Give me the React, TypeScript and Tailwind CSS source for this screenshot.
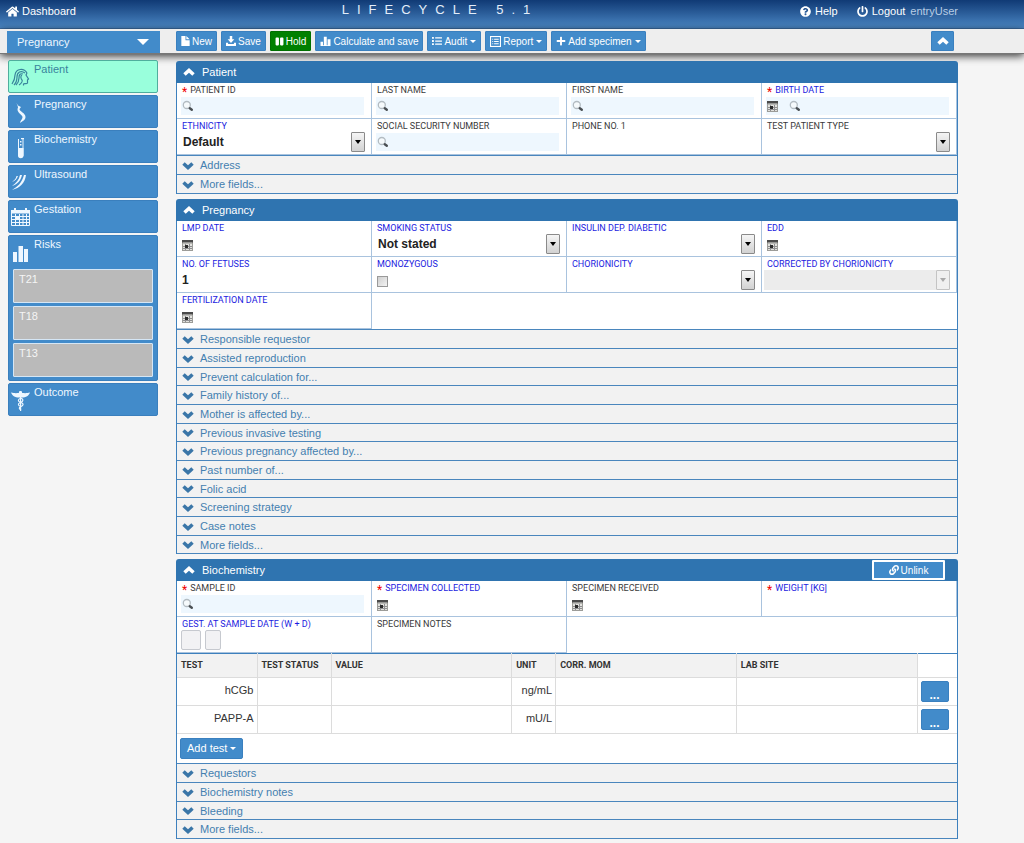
import { ReactNode, useState } from "react";
import { FaHome, FaLink, FaList, FaPause, FaPlus, FaPowerOff, FaQuestionCircle } from "react-icons/fa";

type FieldProps = {
  id: string;
  label: string;
  required?: boolean;
  blue?: boolean;
  children: ReactNode;
};

/* ---------- small drawings ---------- */

const Caret = () => (
  <svg viewBox="0 0 8 4" className="w-[6px] h-[3px] ml-px" fill="currentColor">
    <path d="M0 0h8L4 4z" />
  </svg>
);

const ChevronUp = () => (
  <svg viewBox="0 0 12 8" className="w-[12px] h-[8px]" fill="currentColor">
    <path d="M6 0l5.700 5.300L9.300 7.800 6 4.700 2.700 7.800.3 5.300z" />
  </svg>
);

const ChevronDown = () => (
  <svg viewBox="0 0 12 8" className="w-[12px] h-[8px] text-[#3a76a8]" fill="currentColor">
    <path d="M6 8L.3 2.700 2.700.2 6 3.300 9.300.2l2.400 2.500z" />
  </svg>
);

const FileIcon = () => (
  <svg viewBox="0 0 10 12" className="w-[9px] h-[10px]" fill="currentColor">
    <path d="M0 0h5v5h5v7H0z M6 0l4 4H6z" />
  </svg>
);

const SaveIcon = () => (
  <svg viewBox="0 0 12 12" className="w-[10px] h-[10px]" fill="currentColor">
    <path d="M4.500 0h3v4H10L6 8.300 2 4h2.500z M0 8h2.500v1.500h7V8H12v4H0z" />
  </svg>
);

const ChartIcon = () => (
  <svg viewBox="0 0 12 12" className="w-[11px] h-[10px]" fill="currentColor">
    <path d="M0 7h3v4H0z M4 1h3.500v10H4z M8.500 4H12v7H8.500z M0 11h12v1H0z" />
  </svg>
);

const ReportIcon = () => (
  <svg viewBox="0 0 12 12" className="w-[11px] h-[11px]" fill="none" stroke="currentColor">
    <rect x=".6" y=".6" width="10.800" height="10.800" strokeWidth="1.200" />
    <path d="M2.500 3.500h1M4.500 3.500h5M2.500 6h1M4.500 6h5M2.500 8.500h1M4.500 8.500h5" strokeWidth="1.200" />
  </svg>
);

const SearchIcon = () => (
  <svg viewBox="0 0 12 12" className="w-[12px] h-[12px]">
    <circle cx="4.800" cy="5" r="3.500" fill="#f6fafc" stroke="#b3bcc2" strokeWidth="1.300" />
    <path d="M7.800 8.200l2 1.500" stroke="#4a4f53" strokeWidth="2.400" strokeLinecap="round" />
  </svg>
);

const CalendarIcon = () => (
  <svg viewBox="0 0 11 11" className="w-[11px] h-[11px]">
    <rect x=".5" y=".5" width="10" height="10" fill="#e2e2de" stroke="#9c9c98" />
    <path d="M0 0h11v2.500H0z" fill="#4a4a4a" />
    <path d="M1 3.500h9" stroke="#b9b9b6" />
    <path d="M3.500 4v6M7.500 4v6M1 6.500h9M1 8.500h9" stroke="#8e8e90" />
    <path d="M3 5h3v3H3z" fill="#2c2c2c" />
  </svg>
);

const WomanIcon = () => (
  <svg viewBox="0 0 19 19" className="w-[19px] h-[19px]" fill="none" stroke="currentColor" strokeWidth="1.200">
    <path d="M16 5C13 0 5 0 4 7c0 4-1 6-3 9M14 5C10 2 6 4 6 9c0 4-1 6-3 8M12 6c-3-1-4 1-4 4s-1 5-3 7M11 7c-2 1-1 4 0 5s-1 4-3 5" />
    <path d="M16 5l-1 2 2.500 4-1 1v3c-1 1.500-3 0-4 1v1.500" />
  </svg>
);

const BellyIcon = () => (
  <svg viewBox="0 0 19 20" className="w-[19px] h-[20px]" fill="currentColor">
    <path d="M5.500 0l1.500 2.500 3 1.500-1.500 2c0 2.500 6 4 6 8 0 3-3 4-5.500 6 .5-3 2.500-3.500 2.500-6 0-2-5-4-5-7.500 0-1 .5-1.500.5-2.500z" />
  </svg>
);

const TubeIcon = () => (
  <svg viewBox="0 0 19 21" className="w-[19px] h-[21px]">
    <path d="M7.500 1v16.500a2.500 2.500 0 0 0 4.500 0V1" fill="none" stroke="currentColor" />
    <path d="M7 10h5.500v7.500a2.700 2.700 0 0 1-5.500 0z M9 3h1.500v1.500H9z M9 6h1.500v1.500H9z M10 0h3v1.200h-3z" fill="currentColor" />
  </svg>
);

const WavesIcon = () => (
  <svg viewBox="0 0 19 18" className="w-[19px] h-[18px]" fill="currentColor">
    <path d="M15 2C14 10 9 15 1 17c5-3 10-7 12-15z M11 2c-1 5-4 9-10 11 4-3 7-6 8-11z M7 3c-1 3-3 5-6 6 2-2 4-3 4.500-6z" />
  </svg>
);

const MonthIcon = () => (
  <svg viewBox="0 0 19 18" className="w-[19px] h-[18px]" fill="currentColor">
    <path d="M0 2h19v3.500H0z M3 0h2v2H3z M14 0h2v2h-2z" />
    <path
      d="M.5 5v12.500h18V5M4.500 6v11M8.500 6v11M12 6v11M15.500 6v11M1 8.500h17M1 11.500h17M1 14.500h17"
      fill="none"
      stroke="currentColor"
    />
    <path d="M4 8h4v4H4z" />
  </svg>
);

const BarsIcon = () => (
  <svg viewBox="0 0 19 18" className="w-[19px] h-[18px]" fill="currentColor">
    <path d="M2 7h4v10H2z M7.500 1H12v16H7.500z M13 4h4v13h-4z" />
  </svg>
);

const CaduceusIcon = () => (
  <svg viewBox="0 0 19 20" className="w-[19px] h-[20px]" fill="currentColor">
    <path d="M0 1.500c4 1 6 .5 8 .5a1.600 1.600 0 1 1 3 0c2 0 4 .5 8-.5-1 3-4 5-8 5H8c-4 0-7-2-8-5z M9 5h1.200v15H9z" />
    <path
      d="M10 7c-4 2-3 3.500 0 4.500s2.500 3 0 4-2 2.500 0 3.500M9.500 7c3 1 3.500 3 0 4.500s-2 3 0 4"
      fill="none"
      stroke="currentColor"
      strokeWidth="1.200"
    />
  </svg>
);

/* ---------- form parts ---------- */

const Field = ({ id, label, required, blue, children }: FieldProps) => (
  <div className="border-r border-b border-[#a9c3de] px-1">
    <label
      htmlFor={id}
      className={`block px-px pt-px text-[9px] leading-[12px] font-['Roboto',sans-serif] ${
        blue ? "text-[#1c1ce0]" : "text-[#3a3a3a]"
      }`}
    >
      {required && <span className="text-[#f00000] text-[12px] leading-[8px] align-bottom">* </span>}
      {label}
    </label>
    {children}
  </div>
);

const SearchInput = ({ id, calendar }: { id: string; calendar?: boolean }) => (
  <div className="flex items-center gap-[11px] h-[18px] mt-px mr-[3px] px-px bg-[#eef7fe]">
    {calendar && (
      <button type="button" aria-label="Pick date">
        <CalendarIcon />
      </button>
    )}
    <SearchIcon />
    <input id={id} className="flex-1 min-w-0 text-xs font-bold outline-none" />
  </div>
);

const DateInput = ({ id }: { id: string }) => (
  <div className="flex items-center h-[18px] mt-[2px] px-px">
    <button type="button" aria-label="Pick date">
      <CalendarIcon />
    </button>
    <input id={id} className="flex-1 min-w-0 px-1 text-xs font-bold outline-none" />
  </div>
);

const TextInput = ({ id, value }: { id: string; value?: string }) => (
  <input
    id={id}
    defaultValue={value}
    className="block w-full h-[20px] px-px text-xs font-bold text-[#222] outline-none"
  />
);

const SelectInput = ({ id, value, disabled }: { id: string; value?: string; disabled?: boolean }) => (
  <div className="relative mr-[2px] -ml-[2px]">
    <select
      id={id}
      disabled={disabled}
      className="block appearance-none w-full h-[20px] pl-1 text-xs font-bold text-[#222] outline-none disabled:bg-[#ececec]"
    >
      <option>{value}</option>
    </select>
    <span
      className={`pointer-events-none absolute right-0 top-0 flex items-center justify-center w-[14px] h-[20px] border rounded-[1px] ${
        disabled
          ? "border-[#c4c4c4] bg-[#f0f0f0] text-[#aaa]"
          : "border-[#8a8a8a] bg-linear-to-b from-[#f5f5f5] to-[#d2d2d2] text-black"
      }`}
    >
      <svg viewBox="0 0 6 4" className="w-[6px] h-[4px]" fill="currentColor">
        <path d="M0 0h6L3 4z" />
      </svg>
    </span>
  </div>
);

const Panel = ({ title, action, children }: { title: string; action?: ReactNode; children: ReactNode }) => {
  const [open, setOpen] = useState(true);

  return (
    <section>
      <h2 className="flex items-center justify-between h-[22px] pl-[7px] pr-[13px] rounded-t-[3px] bg-[#2f74b0] text-white text-[11px]">
        <button type="button" onClick={() => setOpen(!open)} className="flex items-center gap-[7px]">
          <ChevronUp />
          {title}
        </button>
        {action}
      </h2>
      {open && <div className="border-x border-[#3d80bd] bg-white">{children}</div>}
    </section>
  );
};

const Fields = ({ children }: { children: ReactNode }) => (
  <div className="grid grid-cols-4 auto-rows-[36px]">{children}</div>
);

const Collapsed = ({ items }: { items: string[] }) => (
  <ul className="border-t border-[#4a86bd] bg-[#f2f2f2]">
    {items.map((item) => (
      <li key={item} className="h-[19px] nth-[3n]:h-[18px] border-b border-[#4a86bd]">
        <button type="button" className="flex items-center gap-[6px] w-full h-full pl-[5px] pt-px text-[11px] text-[#4480b0]">
          <ChevronDown />
          {item}
        </button>
      </li>
    ))}
  </ul>
);

const toolButton =
  "flex items-center justify-center gap-[2px] h-[20px] px-1 rounded-[1px] border text-white text-[10px]";
const blueButton = "bg-[#428bca] border-[#3a80bf]";

const pregnancyItems = [
  "Responsible requestor",
  "Assisted reproduction",
  "Prevent calculation for...",
  "Family history of...",
  "Mother is affected by...",
  "Previous invasive testing",
  "Previous pregnancy affected by...",
  "Past number of...",
  "Folic acid",
  "Screening strategy",
  "Case notes",
  "More fields...",
];

const tests = [
  { name: "hCGb", unit: "ng/mL" },
  { name: "PAPP-A", unit: "mU/L" },
];

const navItem = "flex gap-1 w-full h-[33px] pl-[2px] rounded-[2px] border text-left text-[11px] leading-[17px]";
const blueNav = "bg-[#428bca] border-[#3a7fbd] text-[#eef7ff]";

const navItems = [
  { name: "Pregnancy", icon: <BellyIcon /> },
  { name: "Biochemistry", icon: <TubeIcon /> },
  { name: "Ultrasound", icon: <WavesIcon /> },
  { name: "Gestation", icon: <MonthIcon /> },
];

const Sidebar = () => (
  <nav className="relative flex flex-col gap-[2px] w-[150px] shrink-0">
    <button type="button" className={`${navItem} bg-[#99ffdc] border-[#4fae9d] text-[#39849c]`}>
      <span className="pt-[7px]">
        <WomanIcon />
      </span>
      Patient
    </button>
    {navItems.map((item) => (
      <button key={item.name} type="button" className={`${navItem} ${blueNav}`}>
        <span className="pt-[7px]">{item.icon}</span>
        {item.name}
      </button>
    ))}
    <div className="rounded-[2px] border bg-[#428bca] border-[#3a7fbd] pb-[3px]">
      <button
        type="button"
        className="flex gap-1 w-full h-[33px] pl-[2px] text-left text-[11px] leading-[17px] text-[#eef7ff]"
      >
        <span className="pt-[9px]">
          <BarsIcon />
        </span>
        Risks
      </button>
      <div className="flex flex-col gap-[3px] px-1">
        {["T21", "T18", "T13"].map((risk) => (
          <button
            key={risk}
            type="button"
            className="h-[34px] pl-[5px] pt-px flex border border-[#d5e6f5] rounded-[1px] bg-[#bababa] text-[#f5f5f5] text-[11px] leading-[17px]"
          >
            {risk}
          </button>
        ))}
      </div>
    </div>
    <button type="button" className={`${navItem} ${blueNav}`}>
      <span className="pt-[7px]">
        <CaduceusIcon />
      </span>
      Outcome
    </button>
  </nav>
);

const Header = () => (
  <header className="flex items-start h-[29px] pl-[6px] pr-[66px] bg-linear-to-b from-[#103a75] to-[#4b87c4] border-b border-[#3c6ea6] text-white text-[11px]">
    <div className="flex-4 flex items-center h-[22px]">
      <a href="#" className="flex items-center gap-[3px]">
        <FaHome className="size-[13px]" />
        Dashboard
      </a>
    </div>
    <h1 className="text-[13px] leading-[20px] tracking-[8px] text-[#e4eefa]">LIFECYCLE 5.1</h1>
    <div className="flex-5 flex items-center justify-end h-[22px]">
      <a href="#" className="flex items-center gap-1">
        <FaQuestionCircle className="size-[11px]" />
        Help
      </a>
      <a href="#" className="flex items-center gap-1 ml-[19px]">
        <FaPowerOff className="size-[11px]" />
        Logout
      </a>
      <span className="ml-[5px] text-[#b9cde4]">entryUser</span>
    </div>
  </header>
);

const Toolbar = () => (
  <div className="relative flex items-start h-[25px] pt-[2px] pl-[7px] pr-[70px] bg-[#eeeeee] border-b border-[#777] shadow-[0_2px_8px_rgba(0,0,0,0.8)]">
    <button
      type="button"
      className="flex items-center justify-between w-[153px] h-[22px] mr-[16px] pl-[10px] pr-[11px] bg-[#428bca] text-[#eef7ff] text-[11px]"
    >
      Pregnancy
      <svg viewBox="0 0 12 6" className="w-[12px] h-[6px]" fill="white">
        <path d="M0 0h12L6 6z" />
      </svg>
    </button>
    <div className="flex gap-1 flex-1">
      <button type="button" className={`${toolButton} ${blueButton}`}>
        <FileIcon />
        New
      </button>
      <button type="button" className={`${toolButton} ${blueButton}`}>
        <SaveIcon />
        Save
      </button>
      <button type="button" className={`${toolButton} bg-[#008000] border-[#007000]`}>
        <FaPause className="size-[9px]" />
        Hold
      </button>
      <button type="button" className={`${toolButton} ${blueButton}`}>
        <ChartIcon />
        Calculate and save
      </button>
      <button type="button" className={`${toolButton} ${blueButton}`}>
        <FaList className="size-[10px]" />
        Audit
        <Caret />
      </button>
      <button type="button" className={`${toolButton} ${blueButton}`}>
        <ReportIcon />
        Report
        <Caret />
      </button>
      <button type="button" className={`${toolButton} ${blueButton}`}>
        <FaPlus className="size-[10px]" />
        Add specimen
        <Caret />
      </button>
    </div>
    <button type="button" aria-label="Collapse" className={`${toolButton} ${blueButton} w-[23px]`}>
      <ChevronUp />
    </button>
  </div>
);

const App = () => {
  return (
    <div className="min-h-screen bg-[#f5f5f5] text-[#333] font-['Liberation_Sans',Arial,sans-serif]">
      <Header />
      <Toolbar />

      <div className="flex items-start gap-[18px] pl-2 pr-[66px] pt-[6px]">
        <Sidebar />

        <main className="relative flex-1 min-w-0 flex flex-col gap-[5px] pt-px pb-[5px]">
          <Panel title="Patient">
            <Fields>
              <Field id="patient-id" label="PATIENT ID" required>
                <SearchInput id="patient-id" />
              </Field>
              <Field id="last-name" label="LAST NAME">
                <SearchInput id="last-name" />
              </Field>
              <Field id="first-name" label="FIRST NAME">
                <SearchInput id="first-name" />
              </Field>
              <Field id="birth-date" label="BIRTH DATE" required blue>
                <SearchInput id="birth-date" calendar />
              </Field>
              <Field id="ethnicity" label="ETHNICITY" blue>
                <SelectInput id="ethnicity" value="Default" />
              </Field>
              <Field id="ssn" label="SOCIAL SECURITY NUMBER">
                <SearchInput id="ssn" />
              </Field>
              <Field id="phone" label="PHONE NO. 1">
                <TextInput id="phone" />
              </Field>
              <Field id="patient-type" label="TEST PATIENT TYPE">
                <SelectInput id="patient-type" />
              </Field>
            </Fields>
            <Collapsed items={["Address", "More fields..."]} />
          </Panel>

          <Panel title="Pregnancy">
            <Fields>
              <Field id="lmp" label="LMP DATE" blue>
                <DateInput id="lmp" />
              </Field>
              <Field id="smoking" label="SMOKING STATUS" blue>
                <SelectInput id="smoking" value="Not stated" />
              </Field>
              <Field id="diabetic" label="INSULIN DEP. DIABETIC" blue>
                <SelectInput id="diabetic" />
              </Field>
              <Field id="edd" label="EDD" blue>
                <DateInput id="edd" />
              </Field>
              <Field id="fetuses" label="NO. OF FETUSES" blue>
                <TextInput id="fetuses" value="1" />
              </Field>
              <Field id="monozygous" label="MONOZYGOUS" blue>
                <input
                  id="monozygous"
                  type="checkbox"
                  className="block appearance-none size-[11px] mt-[6px] ml-px border border-[#9a9a9a] bg-linear-to-br from-[#cfcfcf] to-[#f4f4f4] checked:bg-[#428bca]"
                />
              </Field>
              <Field id="chorionicity" label="CHORIONICITY" blue>
                <SelectInput id="chorionicity" />
              </Field>
              <Field id="corrected" label="CORRECTED BY CHORIONICITY" blue>
                <SelectInput id="corrected" disabled />
              </Field>
              <Field id="fertilization" label="FERTILIZATION DATE" blue>
                <DateInput id="fertilization" />
              </Field>
            </Fields>
            <Collapsed items={pregnancyItems} />
          </Panel>

          <Panel
            title="Biochemistry"
            action={
              <button
                type="button"
                className="flex items-center justify-center gap-[2px] w-[73px] h-[20px] border-2 border-white rounded-[1px] bg-[#428bca] text-[10px]"
              >
                <FaLink className="size-[10px]" />
                Unlink
              </button>
            }
          >
            <Fields>
              <Field id="sample-id" label="SAMPLE ID" required>
                <SearchInput id="sample-id" />
              </Field>
              <Field id="collected" label="SPECIMEN COLLECTED" required blue>
                <DateInput id="collected" />
              </Field>
              <Field id="received" label="SPECIMEN RECEIVED">
                <DateInput id="received" />
              </Field>
              <Field id="weight" label="WEIGHT [KG]" required blue>
                <TextInput id="weight" />
              </Field>
              <Field id="gest-weeks" label="GEST. AT SAMPLE DATE (W + D)" blue>
                <div className="flex gap-1 h-[20px]">
                  <input id="gest-weeks" className="w-[20px] border border-[#c6c9cf] rounded-[2px] bg-[#f2f2f4]" />
                  <input aria-label="Days" className="w-[16px] border border-[#c6c9cf] rounded-[2px] bg-[#f2f2f4]" />
                </div>
              </Field>
              <Field id="notes" label="SPECIMEN NOTES">
                <TextInput id="notes" />
              </Field>
            </Fields>

            <table className="w-full table-fixed border-t border-[#3d80bd] text-[11px]">
              <thead>
                <tr className="h-[24px] text-left text-[9px] font-['Roboto',sans-serif]">
                  <th className="w-[80px] px-1 border-r border-b border-[#dcdcdc] bg-[#f2f2f2]">TEST</th>
                  <th className="w-[74px] px-1 border-r border-b border-[#dcdcdc] bg-[#f2f2f2]">TEST STATUS</th>
                  <th className="px-1 border-r border-b border-[#dcdcdc] bg-[#f2f2f2]">VALUE</th>
                  <th className="w-[44px] px-1 border-r border-b border-[#dcdcdc] bg-[#f2f2f2]">UNIT</th>
                  <th className="px-1 border-r border-b border-[#dcdcdc] bg-[#f2f2f2]">CORR. MOM</th>
                  <th className="px-1 border-r border-b border-[#dcdcdc] bg-[#f2f2f2]">LAB SITE</th>
                  <td className="w-[40px] border-b border-[#dcdcdc]"></td>
                </tr>
              </thead>
              <tbody>
                {tests.map((test) => (
                  <tr key={test.name} className="h-[28px] border-b border-[#dcdcdc]">
                    <td className="px-[3px] pb-[3px] border-r border-[#dcdcdc] text-right">{test.name}</td>
                    <td className="border-r border-[#dcdcdc]"></td>
                    <td className="border-r border-[#dcdcdc]"></td>
                    <td className="px-[3px] pb-[3px] border-r border-[#dcdcdc] text-right">{test.unit}</td>
                    <td className="border-r border-[#dcdcdc]"></td>
                    <td className="border-r border-[#dcdcdc]"></td>
                    <td className="pl-[3px]">
                      <button
                        type="button"
                        aria-label={`More for ${test.name}`}
                        className="flex items-end justify-center w-[28px] h-[21px] rounded-[2px] border border-[#3a80bf] bg-[#428bca] text-white text-xs leading-[12px] font-bold"
                      >
                        ...
                      </button>
                    </td>
                  </tr>
                ))}
              </tbody>
            </table>

            <div className="h-[29px] px-[3px] pt-[4px]">
              <button
                type="button"
                className="flex items-center gap-[2px] h-[21px] px-[6px] rounded-[2px] border border-[#3a80bf] bg-[#428bca] text-white text-[11px]"
              >
                Add test
                <Caret />
              </button>
            </div>
            <Collapsed items={["Requestors", "Biochemistry notes", "Bleeding", "More fields..."]} />
          </Panel>
        </main>
      </div>
    </div>
  );
};

export default App;
